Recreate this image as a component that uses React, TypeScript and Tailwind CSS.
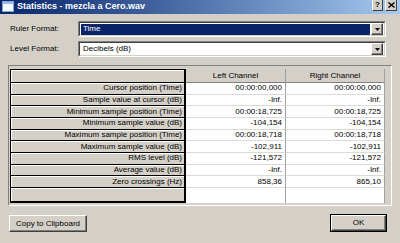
import React from 'react'

const rows: [string, string, string][] = [
  ['Cursor position (Time)', '00:00:00,000', '00:00:00,000'],
  ['Sample value at cursor (dB)', '-Inf.', '-Inf.'],
  ['Minimum sample position (Time)', '00:00:18,725', '00:00:18,725'],
  ['Minimum sample value (dB)', '-104,154', '-104,154'],
  ['Maximum sample position (Time)', '00:00:18,718', '00:00:18,718'],
  ['Maximum sample value (dB)', '-102,911', '-102,911'],
  ['RMS level (dB)', '-121,572', '-121,572'],
  ['Average value (dB)', '-Inf.', '-Inf.'],
  ['Zero crossings (Hz)', '858,36', '865,10'],
]

function DropArrow() {
  return (
    <div className="w-[12px] h-[12px] bg-[#d4d0c8] border border-t-white border-l-white border-r-[#404040] border-b-[#404040] shadow-[inset_-1px_-1px_0_#808080] flex items-center justify-center">
      <svg width="5" height="3" viewBox="0 0 5 3">
        <path d="M0 0h5L2.5 3z" fill="#000" />
      </svg>
    </div>
  )
}

function Combo({ value, selected }: { value: string; selected?: boolean }) {
  return (
    <div className="w-[308px] h-[16px] border border-t-[#808080] border-l-[#808080] border-r-white border-b-white">
      <div className="h-full border border-t-[#404040] border-l-[#404040] border-r-[#d4d0c8] border-b-[#d4d0c8] bg-white flex items-center pl-[1px] pr-[1px] gap-[1px]">
        <div className={`flex-1 h-[11px] flex items-center pl-[2px] ${selected ? 'bg-[#0a246a] text-white' : 'text-black'}`}>
          {value}
        </div>
        <DropArrow />
      </div>
    </div>
  )
}

function Button({ label, isDefault, className }: { label: string; isDefault?: boolean; className: string }) {
  return (
    <div className={`${className} ${isDefault ? 'border border-black' : ''}`}>
      <div className="h-full bg-[#d4d0c8] border border-t-white border-l-white border-r-[#404040] border-b-[#404040] shadow-[inset_-1px_-1px_0_#808080] flex items-center justify-center text-black">
        {label}
      </div>
    </div>
  )
}

export default function App() {
  return (
    <div className="w-[400px] h-[243px] overflow-hidden bg-[#d4d0c8] font-['Liberation_Sans',Arial,sans-serif] text-[8px] leading-none text-black">
      {/* title bar */}
      <div className="h-[14px] flex items-center bg-gradient-to-r from-[#0a246a] to-[#a6caf0] pl-[2px] pr-[3px]">
        <svg width="12" height="11" viewBox="0 0 12 11" className="-mt-[2px]">
          <rect x="0.5" y="0.5" width="11" height="10" fill="#f4f8ff" stroke="#7fa6d8" />
          <rect x="1" y="1" width="10" height="2" fill="#9cc0ee" />
        </svg>
        <span className="ml-[3px] text-white font-bold text-[9px] -mt-[1px]">Statistics - mezcla a Cero.wav</span>
        <div className="ml-auto flex gap-[2px] self-start -mt-[2px]">
          <div className="w-[11px] h-[13px] bg-[#d4d0c8] border border-t-white border-l-white border-r-[#404040] border-b-[#404040] flex items-center justify-center font-bold text-[8px]">?</div>
          <div className="w-[12px] h-[13px] bg-[#d4d0c8] border border-t-white border-l-white border-r-[#404040] border-b-[#404040] flex items-center justify-center">
            <svg width="7" height="6" viewBox="0 0 7 6">
              <path d="M0.5 0.5l6 5M6.5 0.5l-6 5" stroke="#000" strokeWidth="1.4" />
            </svg>
          </div>
        </div>
      </div>

      {/* format selectors */}
      <div className="mt-[7px] flex flex-col gap-[4px]">
        <div className="flex items-center">
          <span className="w-[78px] pl-[10px]">Ruler Format:</span>
          <Combo value="Time" selected />
        </div>
        <div className="flex items-center">
          <span className="w-[78px] pl-[10px]">Level Format:</span>
          <Combo value="Decibels (dB)" />
        </div>
      </div>

      {/* statistics grid */}
      <div className="mt-[8px] ml-[8px] w-[384px] h-[141px] border border-t-[#808080] border-l-[#808080] border-r-white border-b-white pt-[3px] pl-[1px]">
        <div className="grid grid-cols-[176px_100px_99px] grid-rows-[14px_repeat(9,11.67px)_15px]">
          <div className="bg-[#d4d0c8] border-l border-t border-b border-r-2 border-black shadow-[inset_1px_1px_0_#fff]" />
          <div className="bg-[#d4d0c8] border-b border-b-[#808080] border-r border-r-[#a0a0a0] flex items-center justify-center">Left Channel</div>
          <div className="bg-[#d4d0c8] border-b border-b-[#808080] border-r border-r-[#a0a0a0] flex items-center justify-center">Right Channel</div>

          {rows.map(([label, left, right]) => (
            <React.Fragment key={label}>
              <div className="bg-[#d4d0c8] border-l border-b border-r-2 border-black shadow-[inset_1px_1px_0_#fff] flex items-center justify-end pr-[2px] whitespace-nowrap">
                {label}
              </div>
              <div className="bg-white border-b border-b-[#dcdad6] border-r border-r-[#a0a0a0] flex items-center justify-end pr-[3px]">
                {left}
              </div>
              <div className="bg-white border-b border-b-[#dcdad6] border-r border-r-[#a0a0a0] flex items-center justify-end pr-[3px]">
                {right}
              </div>
            </React.Fragment>
          ))}

          <div className="bg-[#d4d0c8] border-l border-b-2 border-r-2 border-black shadow-[inset_1px_1px_0_#fff]" />
          <div className="bg-white border-r border-r-[#a0a0a0]" />
          <div className="bg-white border-r border-r-[#a0a0a0]" />
        </div>
      </div>

      {/* buttons */}
      <div className="mt-[8px] flex items-start pl-[9px] pr-[13px]">
        <Button label="Copy to Clipboard" className="w-[78px] h-[17px] mt-[1px]" />
        <Button label="OK" isDefault className="ml-auto w-[57px] h-[18px]" />
      </div>
    </div>
  )
}
